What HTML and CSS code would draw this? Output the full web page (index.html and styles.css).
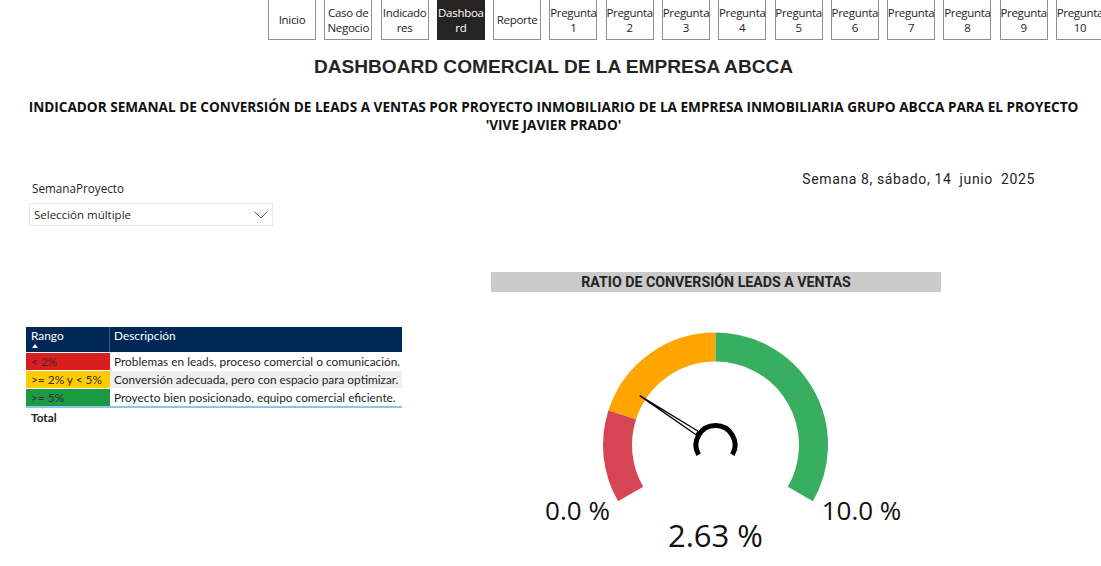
FILE: index.html
```html
<!DOCTYPE html>
<html lang="es">
<head>
<meta charset="utf-8">
<title>Dashboard Comercial ABCCA</title>
<link rel="stylesheet" href="styles.css">
</head>
<body>
<div class="page">
  <nav class="nav">
    <div class="btn">Inicio</div>
    <div class="btn">Caso de<br>Negocio</div>
    <div class="btn">Indicado<br>res</div>
    <div class="btn active">Dashboa<br>rd</div>
    <div class="btn">Reporte</div>
    <div class="btn">Pregunta<br>1</div>
    <div class="btn">Pregunta<br>2</div>
    <div class="btn">Pregunta<br>3</div>
    <div class="btn">Pregunta<br>4</div>
    <div class="btn">Pregunta<br>5</div>
    <div class="btn">Pregunta<br>6</div>
    <div class="btn">Pregunta<br>7</div>
    <div class="btn">Pregunta<br>8</div>
    <div class="btn">Pregunta<br>9</div>
    <div class="btn">Pregunta<br>10</div>
  </nav>

  <h1 class="title">DASHBOARD COMERCIAL DE LA EMPRESA ABCCA</h1>
  <p class="subtitle">INDICADOR SEMANAL DE CONVERSIÓN DE LEADS A VENTAS POR PROYECTO INMOBILIARIO DE LA EMPRESA INMOBILIARIA GRUPO ABCCA PARA EL PROYECTO<br>'VIVE JAVIER PRADO'</p>

  <div class="content">
    <div class="left">
      <div class="slicer">
        <div class="slicer-label">SemanaProyecto</div>
        <div class="dropdown">
          <span>Selección múltiple</span>
          <svg class="chev" width="14" height="8" viewBox="0 0 14 8"><polyline points="0.5,0.5 7,7 13.5,0.5" fill="none" stroke="#605e5c" stroke-width="1"/></svg>
        </div>
      </div>

      <div class="table">
        <div class="thead">
          <div class="th th1">Rango<span class="sort"></span></div>
          <div class="th th2">Descripción</div>
        </div>
        <div class="row">
          <div class="c1 red">&lt; 2%</div>
          <div class="c2">Problemas en leads, proceso comercial o comunicación.</div>
        </div>
        <div class="row">
          <div class="c1 yellow">&gt;= 2% y &lt; 5%</div>
          <div class="c2 alt">Conversión adecuada, pero con espacio para optimizar.</div>
        </div>
        <div class="row">
          <div class="c1 green">&gt;= 5%</div>
          <div class="c2">Proyecto bien posicionado, equipo comercial eficiente.</div>
        </div>
        <div class="total">Total</div>
      </div>
    </div>

    <div class="right">
      <div class="date">Semana 8, sábado, 14&nbsp; junio&nbsp; 2025</div>
      <div class="gauge-card">
        <div class="gauge-title">RATIO DE CONVERSIÓN LEADS A VENTAS</div>
        <svg class="gauge" width="450" height="274" viewBox="0 0 450 274">
          <path d="M139.63 202 A98 98 0 0 1 131.29 122.72" fill="none" stroke="#d64554" stroke-width="29"/>
          <path d="M131.29 122.72 A98 98 0 0 1 224.5 55" fill="none" stroke="#ffa500" stroke-width="29"/>
          <path d="M224.5 55 A98 98 0 0 1 309.37 202" fill="none" stroke="#38ae61" stroke-width="29"/>
          <polygon points="149.1,103.9 207.2,139.3 205.0,142.7" fill="#ffffff" stroke="#000" stroke-width="1.3" stroke-linejoin="round"/>
          <path d="M207.6 162.75 A19.5 19.5 0 1 1 241.4 162.75" fill="none" stroke="#000" stroke-width="5"/>
          <text class="lbl" x="86.5" y="228" text-anchor="middle">0.0 %</text>
          <text class="lbl" x="370.5" y="228" text-anchor="middle">10.0 %</text>
          <text class="val" x="224.5" y="255" text-anchor="middle">2.63 %</text>
        </svg>
      </div>
    </div>
  </div>
</div>
</body>
</html>
```

FILE: styles.css
```css
* { box-sizing: border-box; }
html, body { margin: 0; padding: 0; background: #ffffff; }
body {
  width: 1101px;
  height: 566px;
  overflow: hidden;
  font-family: "Open Sans", "Noto Sans", sans-serif;
  color: #252423;
}
.page { width: 1101px; }

.nav {
  display: flex;
  gap: 8.29px;
  padding-left: 268px;
  height: 40px;
  overflow: visible;
  white-space: nowrap;
}
.btn {
  flex: 0 0 48px;
  width: 48px;
  height: 41px;
  margin-top: -1px;
  border: 1px solid #8f8f8f;
  display: flex;
  align-items: center;
  justify-content: center;
  text-align: center;
  font-size: 11.5px;
  line-height: 15px;
  letter-spacing: -0.3px;
  color: #252423;
  background: #fff;
}
.btn.active {
  background: #252423;
  color: #ffffff;
  border-color: #252423;
}

.title {
  margin: 15px 0 0 6px;
  text-align: center;
  font-family: "Liberation Sans", Arial, sans-serif;
  font-weight: bold;
  font-size: 19.1px;
  line-height: 24px;
  color: #252423;
}
.subtitle {
  margin: 19px 0 0 6px;
  text-align: center;
  font-weight: bold;
  font-size: 13.6px;
  line-height: 18px;
  color: #111;
  white-space: nowrap;
}

.content {
  display: grid;
  grid-template-columns: 430px 1fr;
}
.left { padding-left: 26px; }
.slicer { padding-top: 46px; padding-left: 3px; }
.slicer-label {
  padding-left: 3px;
  font-size: 11.7px;
  line-height: 16px;
  color: #252423;
}
.dropdown {
  margin-top: 7px;
  width: 244px;
  height: 23px;
  border: 1px solid #e9e9e9;
  display: flex;
  align-items: center;
  justify-content: space-between;
  padding: 0 4px 0 4px;
  font-size: 11.5px;
  color: #252423;
}
.chev { display: block; }

.table {
  margin-top: 101px;
  width: 376px;
  font-family: "Lato", "Open Sans", sans-serif;
  font-size: 11.85px;
  white-space: nowrap;
}
.thead {
  display: flex;
  height: 25px;
  background: #002856;
  color: #ffffff;
}
.th { position: relative; padding: 1px 4px 0 5px; line-height: 16px; }
.th1 { flex: 0 0 84px; border-right: 1px solid #3a5a82; }
.th2 { flex: 1; padding-left: 4px; }
.sort {
  position: absolute;
  left: 6px;
  top: 17px;
  width: 0;
  height: 0;
  border-left: 3.5px solid transparent;
  border-right: 3.5px solid transparent;
  border-bottom: 4px solid #ffffff;
}
.row {
  display: flex;
  height: 18px;
  border-top: 1px solid #fff;
}
.c1 {
  flex: 0 0 84px;
  padding-left: 5px;
  line-height: 17px;
  color: #3b2a2a;
}
.c2 {
  flex: 1;
  padding-left: 4px;
  line-height: 17px;
  color: #252423;
  overflow: hidden;
}
.c2.alt { background: #efefef; }
.red { background: #d91e20; }
.yellow { background: #ffcc00; }
.green { background: #1b9a44; }
.total {
  border-top: 2px solid #8cc2ee;
  padding: 1px 0 0 5px;
  font-weight: bold;
  line-height: 18px;
  color: #252423;
}

.right { display: flex; flex-direction: column; }
.date {
  margin-top: 36px;
  padding-right: 66px;
  text-align: right;
  font-family: "Roboto", "Noto Sans", sans-serif;
  font-size: 14px;
  line-height: 18px;
  color: #252423;
  letter-spacing: 0.62px;
}
.gauge-card {
  margin-top: 84px;
  margin-left: 61px;
  width: 450px;
}
.gauge-title {
  height: 20px;
  background: #cacaca;
  text-align: center;
  font-family: "Roboto", "Noto Sans", sans-serif;
  font-weight: bold;
  font-size: 14.2px;
  line-height: 20px;
  color: #252423;
}
.gauge { display: block; }
.lbl {
  font-family: "Open Sans", "Noto Sans", sans-serif;
  font-size: 26px;
  fill: #111;
}
.val {
  font-family: "Open Sans", "Noto Sans", sans-serif;
  font-size: 31px;
  fill: #111;
}
```
